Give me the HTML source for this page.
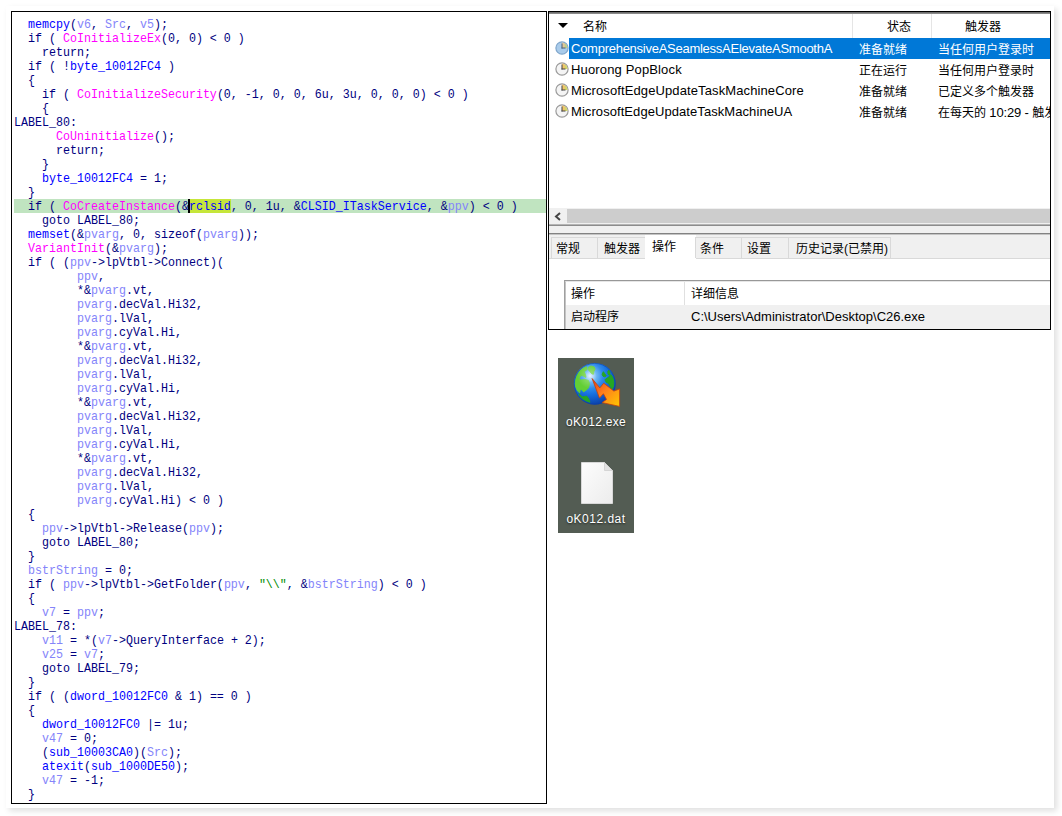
<!DOCTYPE html>
<html lang="zh-CN">
<head>
<meta charset="utf-8">
<title>screenshot</title>
<style>
*{box-sizing:border-box;margin:0;padding:0}
html,body{width:1062px;height:816px;overflow:hidden;background:#fff}
body{position:relative;font-family:"Liberation Sans","Noto Sans CJK SC",sans-serif}
#card{position:absolute;left:6px;top:6px;width:1048px;height:802px;background:#fff;box-shadow:3px 3px 6px rgba(0,0,0,.125)}
#code{position:absolute;left:11px;top:11px;width:536px;height:793px;border:1px solid #000;background:#fff;overflow:hidden}
#src{position:absolute;left:2px;top:6px;font-family:"Liberation Mono",monospace;font-size:11.667px;color:#000080}
.cl{height:14px;line-height:14px;white-space:pre;transform:scaleY(1.06);transform-origin:0 10px}
#hl{position:absolute;left:2px;top:187px;width:532px;height:14px;background:#c0e4c0}
#sel{position:absolute;left:178px;top:187px;width:41px;height:14px;background:#c6e63a}
#caret{position:absolute;left:176px;top:187px;width:2px;height:14px;background:#000}
.b{color:#0000ff}.m{color:#ff00ff}.v{color:#8484fa}.s{color:#008c00}
#ts{position:absolute;left:548px;top:11px;width:503px;height:319px;border:1px solid #000;background:#fff;overflow:hidden;font-size:12px;color:#000}
#ts .abs{position:absolute}
#ts .ln{position:absolute;left:0;width:501px}
#ts .t{position:absolute;white-space:nowrap;line-height:16px;height:16px;font-size:12px}
#ts .l{font-size:13px}
#ts .row{position:absolute;left:0;width:501px;height:21px}
#ts .ic{position:absolute;left:5.7px;top:3.4px;width:14px;height:14px}
#ts .tab{position:absolute;top:225px;height:21px;background:#f0f0f0;border:1px solid #d9d9d9;border-bottom:none}
#desk{position:absolute;left:558px;top:358px;width:76px;height:175px;background:#535c53}
#desk .dl{position:absolute;left:0;width:76px;text-align:center;font-size:12px;line-height:16px;color:#fff;letter-spacing:.2px;text-shadow:0 1px 2px rgba(0,0,0,.6)}
</style>
</head>
<body>
<div id="card"></div>
<div id="code">
<div id="hl"></div><div id="sel"></div><div id="caret"></div>
<div id="src">
<div class="cl">  <span class="b">memcpy</span>(<span class="v">v6</span>, <span class="v">Src</span>, <span class="v">v5</span>);</div>
<div class="cl">  if ( <span class="m">CoInitializeEx</span>(0, 0) &lt; 0 )</div>
<div class="cl">    return;</div>
<div class="cl">  if ( !<span class="b">byte_10012FC4</span> )</div>
<div class="cl">  {</div>
<div class="cl">    if ( <span class="m">CoInitializeSecurity</span>(0, -1, 0, 0, 6u, 3u, 0, 0, 0) &lt; 0 )</div>
<div class="cl">    {</div>
<div class="cl">LABEL_80:</div>
<div class="cl">      <span class="m">CoUninitialize</span>();</div>
<div class="cl">      return;</div>
<div class="cl">    }</div>
<div class="cl">    <span class="b">byte_10012FC4</span> = 1;</div>
<div class="cl">  }</div>
<div class="cl">  if ( <span class="m">CoCreateInstance</span>(&amp;<span class="b">rclsid</span>, 0, 1u, &amp;<span class="b">CLSID_ITaskService</span>, &amp;<span class="v">ppv</span>) &lt; 0 )</div>
<div class="cl">    goto LABEL_80;</div>
<div class="cl">  <span class="b">memset</span>(&amp;<span class="v">pvarg</span>, 0, sizeof(<span class="v">pvarg</span>));</div>
<div class="cl">  <span class="m">VariantInit</span>(&amp;<span class="v">pvarg</span>);</div>
<div class="cl">  if ( (<span class="v">ppv</span>-&gt;lpVtbl-&gt;Connect)(</div>
<div class="cl">         <span class="v">ppv</span>,</div>
<div class="cl">         *&amp;<span class="v">pvarg</span>.vt,</div>
<div class="cl">         <span class="v">pvarg</span>.decVal.Hi32,</div>
<div class="cl">         <span class="v">pvarg</span>.lVal,</div>
<div class="cl">         <span class="v">pvarg</span>.cyVal.Hi,</div>
<div class="cl">         *&amp;<span class="v">pvarg</span>.vt,</div>
<div class="cl">         <span class="v">pvarg</span>.decVal.Hi32,</div>
<div class="cl">         <span class="v">pvarg</span>.lVal,</div>
<div class="cl">         <span class="v">pvarg</span>.cyVal.Hi,</div>
<div class="cl">         *&amp;<span class="v">pvarg</span>.vt,</div>
<div class="cl">         <span class="v">pvarg</span>.decVal.Hi32,</div>
<div class="cl">         <span class="v">pvarg</span>.lVal,</div>
<div class="cl">         <span class="v">pvarg</span>.cyVal.Hi,</div>
<div class="cl">         *&amp;<span class="v">pvarg</span>.vt,</div>
<div class="cl">         <span class="v">pvarg</span>.decVal.Hi32,</div>
<div class="cl">         <span class="v">pvarg</span>.lVal,</div>
<div class="cl">         <span class="v">pvarg</span>.cyVal.Hi) &lt; 0 )</div>
<div class="cl">  {</div>
<div class="cl">    <span class="v">ppv</span>-&gt;lpVtbl-&gt;Release(<span class="v">ppv</span>);</div>
<div class="cl">    goto LABEL_80;</div>
<div class="cl">  }</div>
<div class="cl">  <span class="v">bstrString</span> = 0;</div>
<div class="cl">  if ( <span class="v">ppv</span>-&gt;lpVtbl-&gt;GetFolder(<span class="v">ppv</span>, <span class="s">"\\"</span>, &amp;<span class="v">bstrString</span>) &lt; 0 )</div>
<div class="cl">  {</div>
<div class="cl">    <span class="v">v7</span> = <span class="v">ppv</span>;</div>
<div class="cl">LABEL_78:</div>
<div class="cl">    <span class="v">v11</span> = *(<span class="v">v7</span>-&gt;QueryInterface + 2);</div>
<div class="cl">    <span class="v">v25</span> = <span class="v">v7</span>;</div>
<div class="cl">    goto LABEL_79;</div>
<div class="cl">  }</div>
<div class="cl">  if ( (<span class="b">dword_10012FC0</span> &amp; 1) == 0 )</div>
<div class="cl">  {</div>
<div class="cl">    <span class="b">dword_10012FC0</span> |= 1u;</div>
<div class="cl">    <span class="v">v47</span> = 0;</div>
<div class="cl">    (<span class="b">sub_10003CA0</span>)(<span class="v">Src</span>);</div>
<div class="cl">    <span class="b">atexit</span>(<span class="b">sub_1000DE50</span>);</div>
<div class="cl">    <span class="v">v47</span> = -1;</div>
<div class="cl">  }</div>
</div>
</div>
<div id="ts">
<svg width="0" height="0" style="position:absolute"><defs>
<g id="clk"><circle cx="7" cy="7" r="6.1" fill="#f4f4f4" stroke="#9a9a9a" stroke-width="1.2"/><path d="M7 7V1.6A5.4 5.4 0 0 1 12.4 7Z" fill="#f2c46c"/><path d="M9.5 2.3A5.4 5.4 0 0 1 12.4 7H10Z" fill="#cfd86a"/><path d="M7 2.5V7.5M6.5 7H10.5" stroke="#444" stroke-width="1" fill="none"/></g>
<g id="clks"><circle cx="7" cy="7" r="6.1" fill="#a9cbea" stroke="#7fa6cc" stroke-width="1.2"/><path d="M7 7V1.6A5.4 5.4 0 0 1 12.4 7Z" fill="#e3c79a"/><path d="M9.5 2.3A5.4 5.4 0 0 1 12.4 7H10Z" fill="#b9d08c"/><path d="M7 2.5V7.5M6.5 7H10.5" stroke="#4b6077" stroke-width="1" fill="none"/></g>
</defs></svg>
<div class="ln" style="top:0;height:1px;background:#6f6f6f"></div>
<div class="ln" style="top:1px;height:1px;background:#8a8a8a"></div>
<div class="abs" style="left:303px;top:2px;width:1px;height:24px;background:#e5e5e5"></div>
<div class="abs" style="left:382px;top:2px;width:1px;height:24px;background:#e5e5e5"></div>
<svg class="abs" style="left:9px;top:11px" width="10" height="5"><path d="M0 0H10L5 5Z" fill="#000"/></svg>
<div class="t" style="left:34px;top:7px">名称</div>
<div class="t" style="left:338px;top:7px">状态</div>
<div class="t" style="left:416px;top:7px">触发器</div>
<div class="row" style="top:26px"><div class="abs" style="left:20.4px;top:0;width:480.6px;height:21px;background:#0078d7"></div><svg class="ic" viewBox="0 0 14 14"><use href="#clks"/></svg><div class="t l" style="left:22px;top:3px;color:#fff;letter-spacing:-.26px">ComprehensiveASeamlessAElevateASmoothA</div><div class="t" style="left:310px;top:4px;color:#fff">准备就绪</div><div class="t" style="left:389px;top:4px;color:#fff">当任何用户登录时</div></div>
<div class="row" style="top:47px"><svg class="ic" viewBox="0 0 14 14"><use href="#clk"/></svg><div class="t l" style="left:22px;top:3px;letter-spacing:.15px">Huorong PopBlock</div><div class="t" style="left:310px;top:4px">正在运行</div><div class="t" style="left:389px;top:4px">当任何用户登录时</div></div>
<div class="row" style="top:68px"><svg class="ic" viewBox="0 0 14 14"><use href="#clk"/></svg><div class="t l" style="left:22px;top:3px;letter-spacing:.11px">MicrosoftEdgeUpdateTaskMachineCore</div><div class="t" style="left:310px;top:4px">准备就绪</div><div class="t" style="left:389px;top:4px">已定义多个触发器</div></div>
<div class="row" style="top:89px"><svg class="ic" viewBox="0 0 14 14"><use href="#clk"/></svg><div class="t l" style="left:22px;top:3px;letter-spacing:.07px">MicrosoftEdgeUpdateTaskMachineUA</div><div class="t" style="left:310px;top:4px">准备就绪</div><div class="t" style="left:389px;top:4px">在每天的 <span class="l" style="letter-spacing:-.15px">10:29 - </span>触发器</div></div>
<div class="ln" style="top:196px;height:17px;background:#f0f0f0"></div>
<div class="abs" style="left:17.6px;top:197px;width:483.4px;height:14px;background:#cdcdcd"></div>
<svg class="abs" style="left:5px;top:200px" width="8" height="9"><path d="M6 1L2 4.5L6 8" stroke="#444" stroke-width="2" fill="none"/></svg>
<div class="ln" style="top:212px;height:1px;background:#b4b4b4"></div>
<div class="ln" style="top:213px;height:1px;background:#8c8c8c"></div>
<div class="ln" style="top:214px;height:7px;background:#f0f0f0"></div>
<div class="ln" style="top:221px;height:1px;background:#828282"></div>
<div class="ln" style="top:222px;height:1px;background:#c4c4c4"></div>
<div class="ln" style="top:223px;height:24px;background:#f0f0f0;border-bottom:1px solid #d9d9d9"></div>
<div class="tab" style="left:2px;width:47px"></div>
<div class="tab" style="left:48px;width:49px"></div>
<div class="tab" style="left:96px;width:51px;top:223px;height:25px;background:#fff;border-color:#fff"></div>
<div class="tab" style="left:146px;width:47px"></div>
<div class="tab" style="left:192px;width:48px"></div>
<div class="tab" style="left:239px;width:103px"></div>
<div class="t" style="left:7px;top:229px">常规</div>
<div class="t" style="left:55px;top:229px">触发器</div>
<div class="t" style="left:103px;top:227px">操作</div>
<div class="t" style="left:151px;top:229px">条件</div>
<div class="t" style="left:198px;top:229px">设置</div>
<div class="t" style="left:247px;top:229px">历史记录(已禁用)</div>
<div class="abs" style="left:15px;top:268px;width:486px;height:49px;background:#fff;border-left:1px solid #a0a0a0;border-top:1px solid #989898"></div><div class="abs" style="left:16px;top:269px;width:485px;height:48px;border-left:1px solid #c4c4c4;border-top:1px solid #e6e6e6"></div>
<div class="abs" style="left:17px;top:293px;width:484px;height:24px;background:#f0f0f0"></div>
<div class="abs" style="left:135px;top:270px;width:1px;height:23px;background:#e0e0e0"></div>
<div class="t" style="left:22px;top:274px">操作</div>
<div class="t" style="left:142px;top:274px">详细信息</div>
<div class="t" style="left:22px;top:297px">启动程序</div>
<div class="t l" style="left:142px;top:297px">C:\Users\Administrator\Desktop\C26.exe</div>
</div>
<div id="desk">
<svg style="position:absolute;left:14px;top:3px" width="52" height="48" viewBox="0 0 52 48">
<defs>
<radialGradient id="gl" cx="0.39" cy="0.31" r="0.72"><stop offset="0" stop-color="#d6ecff"/><stop offset="0.22" stop-color="#4aa4f2"/><stop offset="0.6" stop-color="#1872e0"/><stop offset="1" stop-color="#0a3ca6"/></radialGradient>
<radialGradient id="gh" cx="0.39" cy="0.31" r="0.3"><stop offset="0" stop-color="#fff" stop-opacity=".4"/><stop offset="1" stop-color="#fff" stop-opacity="0"/></radialGradient>
<linearGradient id="ar" x1="0" y1="0" x2="1" y2="1"><stop offset="0" stop-color="#e63a10"/><stop offset="0.45" stop-color="#ff801c"/><stop offset="1" stop-color="#ffc800"/></linearGradient>
<clipPath id="gc"><circle cx="22.75" cy="22.8" r="20.6"/></clipPath>
</defs>
<circle cx="22.75" cy="22.8" r="20.9" fill="url(#gl)"/>
<g clip-path="url(#gc)" stroke-linejoin="round"><path d="M14.5 5.6 L15.1 8.5 L12.2 10.7 L13.5 13.6 L14.0 16.4 L11.0 14.8 L8.7 14.5 L7.1 17.7 L9.1 19.0 L12.9 18.5 L16.4 19.4 L17.5 22.5 L16.5 26.9 L14.5 28.8 L11.6 30.9 L9.7 28.7 L8.1 28.5 L7.8 31.7 L5.6 30.1 L3.3 25.0 L3.1 21.2 L4.3 16.1 L6.5 11.6 L9.7 8.1ZM16.1 6.6 L18.9 5.0 L22.1 5.9 L23.1 8.1 L21.8 10.7 L21.5 13.2 L19.9 12.9 L18.0 10.7 L16.4 8.8Z" fill="#63cf35" stroke="#63cf35" stroke-width="1"/><path d="M6.8 32.7 L10.3 35.9 L14.8 35.2 L16.7 37.8 L18.0 41.3 L15.1 40.3 L10.6 37.8 L7.8 35.2ZM30.1 13.2 L31.4 10.7 L32.9 12.9 L34.2 14.8 L32.9 15.8 L31.0 15.2ZM35.8 10.7 L36.8 9.1 L38.0 11.3 L37.4 13.9 L36.1 13.2ZM32.9 18.7 L36.8 16.1 L38.7 13.6 L40.6 16.1 L41.9 21.2 L41.5 25.7 L39.9 28.2 L38.0 25.0 L36.8 22.5 L34.2 21.2Z" fill="#25a624" stroke="#25a624" stroke-width="1"/></g>
<circle cx="22.75" cy="22.8" r="20.9" fill="url(#gh)"/>
<circle cx="22.75" cy="22.8" r="20.4" fill="none" stroke="#0b3fa8" stroke-opacity=".55" stroke-width="1"/>
<path d="M20.1 17.5L27.8 26.9L31.7 22.2L41.9 30.1L47.6 27.9L47.6 45.4L30.1 41.6L34.5 38.4L31.4 32.7L27.5 37.1Z" fill="url(#ar)" stroke="#c4400c" stroke-width=".8" stroke-linejoin="round"/>
</svg>
<div class="dl" style="top:56px;letter-spacing:.3px">oK012.exe</div>
<svg style="position:absolute;left:22.5px;top:104px" width="32" height="42" viewBox="0 0 32 42">
<defs><linearGradient id="pg" x1="0" y1="0" x2="1" y2="1"><stop offset="0" stop-color="#fdfdfd"/><stop offset="1" stop-color="#ececec"/></linearGradient></defs>
<path d="M.5 .5H23.5L31.5 8.5V41.5H.5Z" fill="url(#pg)" stroke="#d8d8d8" stroke-width="1"/>
<path d="M23.5 .5V8.5H31.5Z" fill="#e2e2e2" stroke="#cfcfcf" stroke-width=".8"/>
</svg>
<div class="dl" style="top:153px;letter-spacing:.5px">oK012.dat</div>
</div>
</body>
</html>
